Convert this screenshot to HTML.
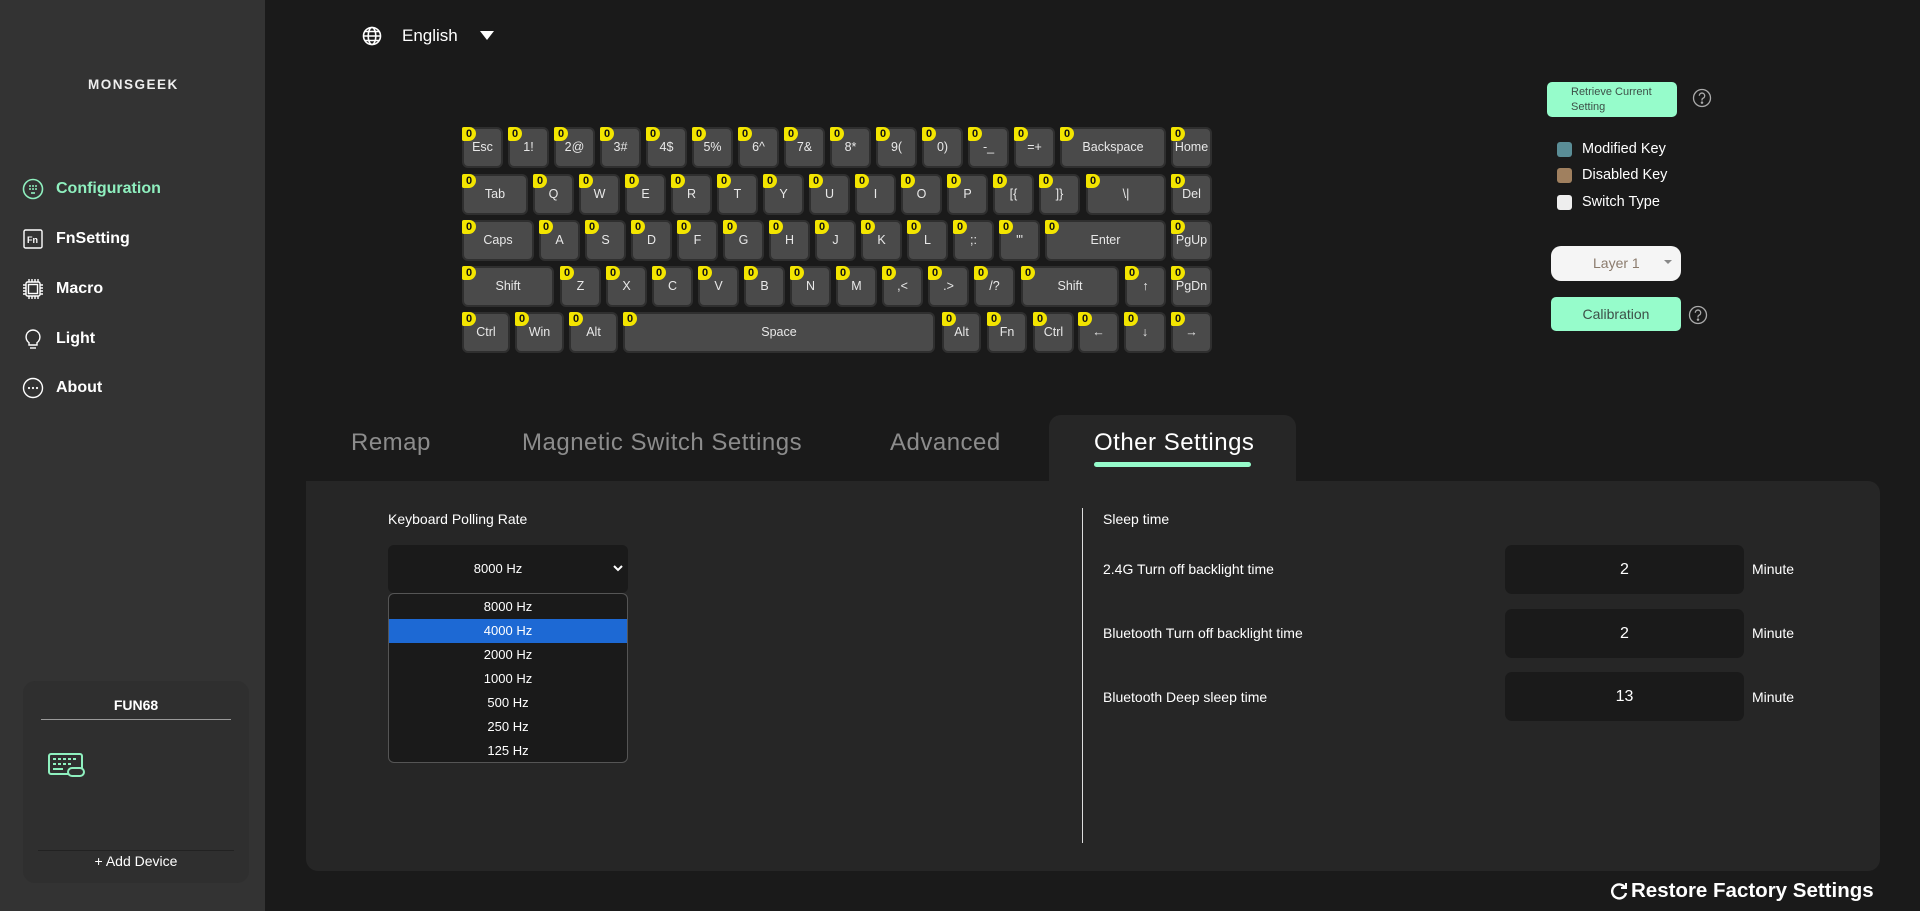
<!DOCTYPE html>
<html><head><meta charset="utf-8">
<style>
*{box-sizing:border-box;margin:0;padding:0}
body{width:1920px;height:911px;background:#1a1a1a;font-family:"Liberation Sans",sans-serif;color:#fff;position:relative;overflow:hidden}
.abs{position:absolute}
#side{left:0;top:0;width:265px;height:911px;background:#333}
.nav{position:absolute;left:22px;font-size:16px;font-weight:bold;display:flex;align-items:center;gap:12px}
.nav svg{width:22px;height:22px}
.key{position:absolute;height:41px;background:#4a4a4a;border:2px solid #2f2f2f;border-radius:6px;color:#e8e8e8;font-size:12.5px;text-align:center;line-height:37px;padding-top:0}
.key i{position:absolute;left:-2px;top:-2px;width:14px;height:14px;background:#f3e500;border-radius:2px 7px 8px 2px;color:#111;font-style:normal;font-size:11px;font-weight:bold;line-height:14px;text-align:center;padding:0}
.tab{position:absolute;top:429px;font-size:24px;color:#8c8c8c;letter-spacing:0.5px}
.lbl{position:absolute;font-size:14px;color:#fff}
.inp{position:absolute;left:1505px;width:239px;height:49px;background:#1a1a1a;border-radius:7px;font-size:16px;text-align:center;line-height:49px}
.min{position:absolute;left:1752px;font-size:14px}
.opt{height:24px;line-height:24px;text-align:center;font-size:13px}
</style></head><body>
<div id="side" class="abs"></div>
<div class="abs" style="left:88px;top:77px;font-size:13.5px;letter-spacing:1.5px;font-weight:bold;color:#eee">MONSGEEK</div>

<div class="nav" style="top:178px;color:#8ff0bf"><svg viewBox="0 0 22 22" fill="none" stroke="#8ff0bf" stroke-width="1.6"><circle cx="11" cy="11" r="9.5"/><g fill="#8ff0bf" stroke="none"><circle cx="8" cy="8" r="1"/><circle cx="11" cy="8" r="1"/><circle cx="14" cy="8" r="1"/><circle cx="8" cy="11" r="1"/><circle cx="11" cy="11" r="1"/><circle cx="14" cy="11" r="1"/></g><path d="M9 15h4"/></svg><span>Configuration</span></div>
<div class="nav" style="top:228px"><svg viewBox="0 0 22 22" fill="none" stroke="#fff" stroke-width="1.4"><rect x="2" y="2" width="18" height="18" rx="1.5"/><text x="5" y="15" font-size="9" fill="#fff" stroke="none" font-family="Liberation Sans">Fn</text></svg><span>FnSetting</span></div>
<div class="nav" style="top:278px"><svg viewBox="0 0 22 22" fill="none" stroke="#fff" stroke-width="1.4"><rect x="4" y="4" width="14" height="14" rx="1.5"/><rect x="6.5" y="6.5" width="9" height="9"/><path d="M7 1v3M10 1v3M13 1v3M16 1v3M7 18v3M10 18v3M13 18v3M16 18v3M1 7h3M1 10h3M1 13h3M1 16h3M18 7h3M18 10h3M18 13h3M18 16h3"/></svg><span>Macro</span></div>
<div class="nav" style="top:328px"><svg viewBox="0 0 22 22" fill="none" stroke="#fff" stroke-width="1.4"><path d="M11 2a7 7 0 0 0-4 12.7V17h8v-2.3A7 7 0 0 0 11 2z"/><path d="M8 20h6"/></svg><span>Light</span></div>
<div class="nav" style="top:377px"><svg viewBox="0 0 22 22" fill="none" stroke="#fff" stroke-width="1.4"><circle cx="11" cy="11" r="9.5"/><g fill="#fff" stroke="none"><circle cx="7" cy="11" r="1.1"/><circle cx="11" cy="11" r="1.1"/><circle cx="15" cy="11" r="1.1"/></g></svg><span>About</span></div>

<div class="abs" style="left:23px;top:681px;width:226px;height:202px;background:#2f2f2f;border-radius:12px"></div>
<div class="abs" style="left:23px;top:697px;width:226px;text-align:center;font-size:14px;font-weight:bold">FUN68</div>
<div class="abs" style="left:41px;top:719px;width:190px;height:1px;background:#9a9a9a"></div>
<svg class="abs" style="left:48px;top:753px" width="38" height="25" viewBox="0 0 38 25" fill="none" stroke="#8ff0bf" stroke-width="2"><rect x="1" y="1" width="33" height="20" rx="2"/><g fill="#8ff0bf" stroke="none"><rect x="5" y="5" width="3" height="2"/><rect x="10" y="5" width="3" height="2"/><rect x="15" y="5" width="3" height="2"/><rect x="20" y="5" width="3" height="2"/><rect x="25" y="5" width="3" height="2"/><rect x="5" y="10" width="3" height="2"/><rect x="10" y="10" width="3" height="2"/><rect x="15" y="10" width="3" height="2"/><rect x="20" y="10" width="3" height="2"/><rect x="5" y="15" width="10" height="2"/></g><rect x="20" y="15" width="16" height="8" rx="4" fill="#2f2f2f"/></svg>
<div class="abs" style="left:38px;top:850px;width:196px;height:1px;background:#222"></div>
<div class="abs" style="left:23px;top:853px;width:226px;text-align:center;font-size:14px">+ Add Device</div>

<svg class="abs" style="left:362px;top:26px" width="20" height="20" viewBox="0 0 20 20" fill="none" stroke="#fff" stroke-width="1.6"><circle cx="10" cy="10" r="8.5"/><ellipse cx="10" cy="10" rx="3.8" ry="8.5"/><path d="M1.5 10h17M3 5.5h14M3 14.5h14"/></svg>
<div class="abs" style="left:402px;top:26px;font-size:17px">English</div>
<svg class="abs" style="left:480px;top:31px" width="14" height="10"><path d="M0 0h14L7 9z" fill="#fff"/></svg>

<div id="kb"></div>

<div class="abs" style="left:1547px;top:82px;width:130px;height:35px;background:#96fccb;border-radius:5px;color:#3d5048;font-size:11px;line-height:15px;padding:3px 0 0 24px">Retrieve Current<br>Setting</div>
<svg class="abs" style="left:1692px;top:88px" width="20" height="20" fill="none" stroke="#aaa" stroke-width="1.3"><circle cx="10" cy="10" r="8.5"/><path d="M7.3 7.8a2.7 2.7 0 1 1 3.6 2.5c-.6.3-.9.7-.9 1.4v.8"/><circle cx="10" cy="14.6" r=".6" fill="#aaa"/></svg>
<div class="abs" style="left:1557px;top:142px;width:15px;height:15px;background:#5a8d96;border-radius:3px"></div>
<div class="abs" style="left:1557px;top:168px;width:15px;height:15px;background:#a0805f;border-radius:3px"></div>
<div class="abs" style="left:1557px;top:195px;width:15px;height:15px;background:#eee;border-radius:3px"></div>
<div class="lbl" style="left:1582px;top:141px;font-size:14.5px">Modified Key</div>
<div class="lbl" style="left:1582px;top:167px;font-size:14.5px">Disabled Key</div>
<div class="lbl" style="left:1582px;top:194px;font-size:14.5px">Switch Type</div>
<div class="abs" style="left:1551px;top:246px;width:130px;height:35px;background:#f5f5f5;border-radius:10px;color:#8b7b6d;font-size:14px;line-height:35px;padding-left:42px">Layer 1</div>
<svg class="abs" style="left:1664px;top:260px" width="8" height="5"><path d="M0 0h8L4 4z" fill="#888"/></svg>
<div class="abs" style="left:1551px;top:297px;width:130px;height:34px;background:#96fccb;border-radius:5px;color:#3d5048;font-size:14px;line-height:34px;text-align:center">Calibration</div>
<svg class="abs" style="left:1688px;top:305px" width="20" height="20" fill="none" stroke="#aaa" stroke-width="1.3"><circle cx="10" cy="10" r="8.5"/><path d="M7.3 7.8a2.7 2.7 0 1 1 3.6 2.5c-.6.3-.9.7-.9 1.4v.8"/><circle cx="10" cy="14.6" r=".6" fill="#aaa"/></svg>

<div class="abs" style="left:1049px;top:415px;width:247px;height:70px;background:#262626;border-radius:12px 12px 0 0"></div>
<div class="abs" style="left:306px;top:481px;width:1574px;height:390px;background:#262626;border-radius:0 12px 12px 12px"></div>
<div class="tab" style="left:351px">Remap</div>
<div class="tab" style="left:522px">Magnetic Switch Settings</div>
<div class="tab" style="left:890px">Advanced</div>
<div class="tab" style="left:1094px;color:#fff">Other Settings</div>
<div class="abs" style="left:1094px;top:462px;width:157px;height:5px;background:#96fccb;border-radius:3px"></div>

<div class="lbl" style="left:388px;top:511px">Keyboard Polling Rate</div>
<div class="abs" style="left:388px;top:545px;width:240px;height:48px;background:#1a1a1a;border-radius:6px;font-size:13px;line-height:48px;text-align:center;padding-right:20px">8000 Hz</div>
<svg class="abs" style="left:613px;top:565px" width="10" height="7" fill="none" stroke="#fff" stroke-width="2"><path d="M1 1l4 4 4-4"/></svg>
<div class="abs" style="left:388px;top:593px;width:240px;height:170px;background:#1a1a1a;border:1px solid #555;border-radius:6px;padding-top:1px;overflow:hidden">
<div class="opt">8000 Hz</div><div class="opt" style="background:#1d69d4">4000 Hz</div><div class="opt">2000 Hz</div><div class="opt">1000 Hz</div><div class="opt">500 Hz</div><div class="opt">250 Hz</div><div class="opt">125 Hz</div></div>

<div class="abs" style="left:1082px;top:508px;width:1px;height:335px;background:#ddd"></div>
<div class="lbl" style="left:1103px;top:511px">Sleep time</div>
<div class="lbl" style="left:1103px;top:561px">2.4G Turn off backlight time</div>
<div class="lbl" style="left:1103px;top:625px">Bluetooth Turn off backlight time</div>
<div class="lbl" style="left:1103px;top:689px">Bluetooth Deep sleep time</div>
<div class="inp" style="top:545px">2</div>
<div class="inp" style="top:609px">2</div>
<div class="inp" style="top:672px">13</div>
<div class="min" style="top:561px">Minute</div>
<div class="min" style="top:625px">Minute</div>
<div class="min" style="top:689px">Minute</div>

<svg class="abs" style="left:1610px;top:882px" width="18" height="18" fill="none" stroke="#fff" stroke-width="2.4"><path d="M15 5.5A7 7 0 1 0 16 11"/><path d="M16 1v5h-5" stroke-width="2"/></svg>
<div class="abs" style="left:1631px;top:879px;font-size:20.5px;font-weight:bold">Restore Factory Settings</div>

<script>
var R=[127,174,220,266,312],K=[];
function row(y,list){list.forEach(function(k){K.push([k[0],y,k[1],k[2]])})}
var r1=[],a="Esc,1!,2@,3#,4$,5%,6^,7&,8*,9(,0),-_,=+".split(",");
a.forEach(function(t,i){r1.push([462+46*i,41,t])});r1.push([1060,106,"Backspace"],[1171,41,"Home"]);row(R[0],r1);
var r2=[[462,66,"Tab"]];"Q,W,E,R,T,Y,U,I,O,P,[{,]}".split(",").forEach(function(t,i){r2.push([533+46*i,41,t])});r2.push([1086,80,"\\|"],[1171,41,"Del"]);row(R[1],r2);
var r3=[[462,72,"Caps"]];"A,S,D,F,G,H,J,K,L,;:,'\"".split(",").forEach(function(t,i){r3.push([539+46*i,41,t])});r3.push([1045,121,"Enter"],[1171,41,"PgUp"]);row(R[2],r3);
var r4=[[462,92,"Shift"]];"Z,X,C,V,B,N,M,A,B,C".split(",").forEach(function(t,i){r4.push([560+46*i,41,t])});
r4[8][2]=",<";r4[9][2]=".>";r4[10][2]="/?";r4.push([1021,98,"Shift"],[1125,41,"\u2191"],[1171,41,"PgDn"]);row(R[3],r4);
row(R[4],[[462,48,"Ctrl"],[515,49,"Win"],[569,49,"Alt"],[623,312,"Space"],[942,39,"Alt"],[987,40,"Fn"],[1033,41,"Ctrl"],[1078,41,"\u2190"],[1124,42,"\u2193"],[1171,41,"\u2192"]]);
var h="";K.forEach(function(k){var t=k[3].replace(/&/g,"&amp;").replace(/</g,"&lt;").replace(/>/g,"&gt;");h+='<div class="key" style="left:'+k[0]+'px;top:'+k[1]+'px;width:'+k[2]+'px"><i>0</i>'+t+'</div>'});
document.getElementById("kb").innerHTML=h;
</script>
</body></html>
